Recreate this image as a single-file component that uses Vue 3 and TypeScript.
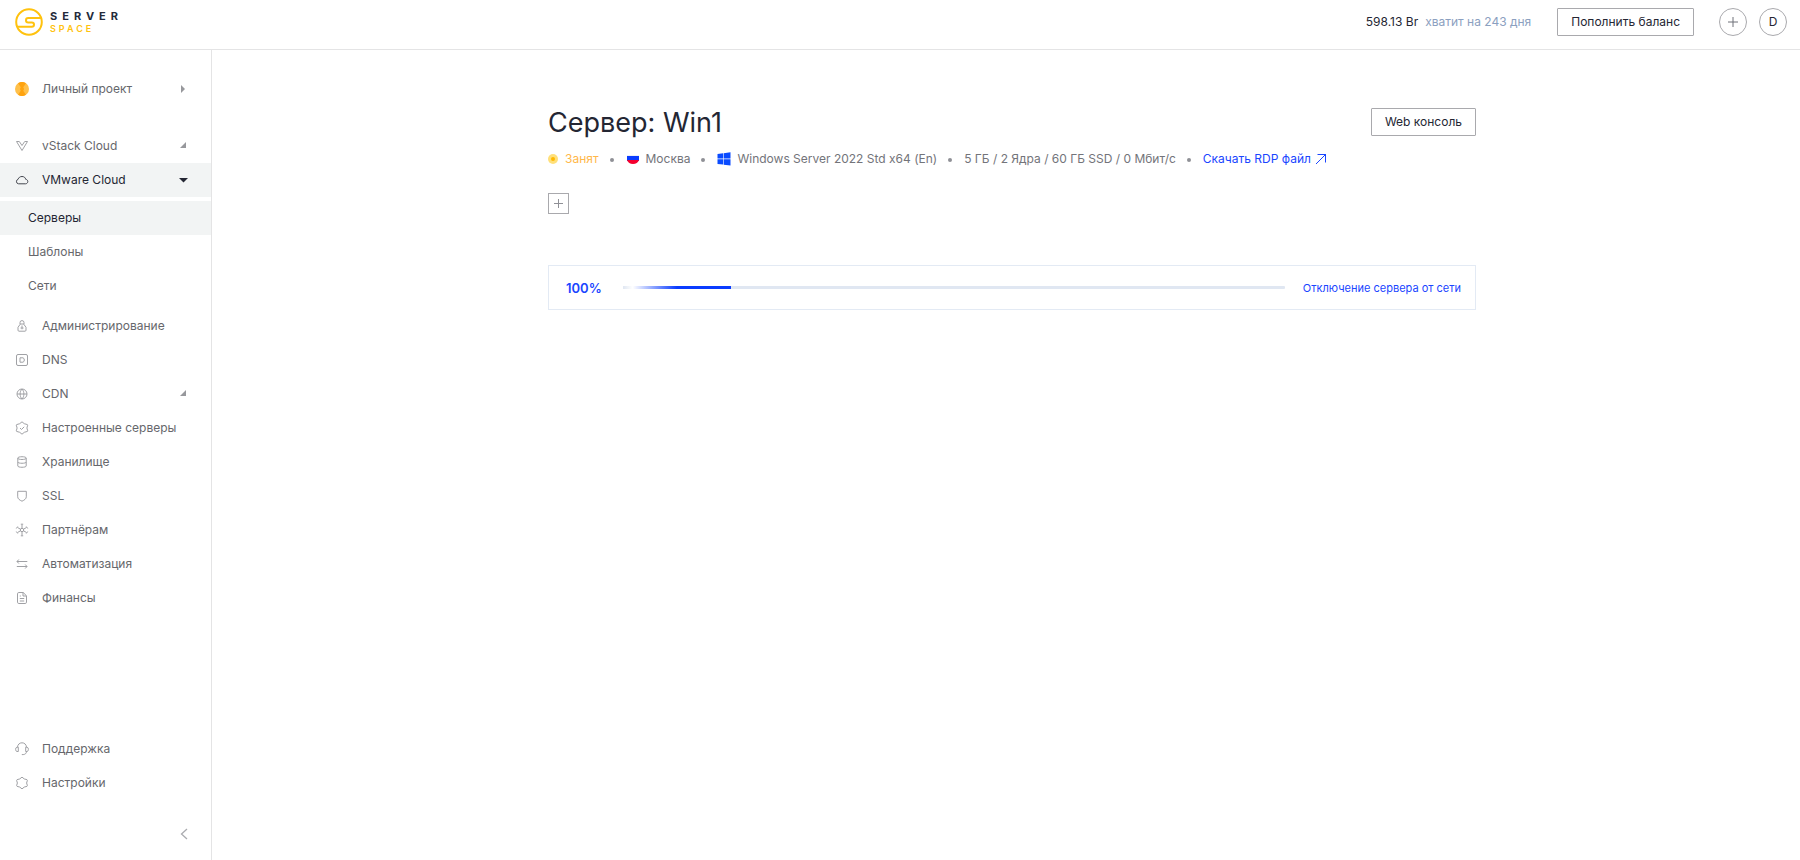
<script setup lang="ts">
interface MenuItem {
  label: string
  icon: string
  arrow?: 'closed' | 'open'
  active?: boolean
  children?: { label: string; active?: boolean }[]
}

// Outline icons on a 14 x 14 grid
const icons: Record<string, string> = {
  vstack: 'M1.500 2.500h2.800L7 6.500l2.700-4h2.800L7 11.500z',
  cloud: 'M3.600 10.800a2.300 2.300 0 0 1-.5-4.500C3.600 4.500 5.100 3.500 7 3.500s3.400 1 3.700 2.800c1.300.2 2.100 1.100 2.100 2.200 0 1.300-1 2.300-2.300 2.300z',
  admin: 'M5 5.500V3.600a2 2 0 0 1 4 0v1.900M5 5h4M5 5.500 3 8.300v2.900c0 .6.400 1 1 1h6c.6 0 1-.4 1-1V8.300L9 5.500M7 6.500v3.800M5.500 9h3',
  dns: 'M3 1.500h8A1.500 1.500 0 0 1 12.500 3v8a1.500 1.500 0 0 1-1.500 1.500H3A1.500 1.500 0 0 1 1.500 11V3A1.500 1.500 0 0 1 3 1.500zM5 4.800h3l1.200 1v2.400l-1.200 1H5z',
  cdn: 'M7 2a5 5 0 1 0 0 10A5 5 0 0 0 7 2zM2 7h10M7 2C4.500 4.500 4.500 9.500 7 12M7 2c2.500 2.500 2.500 7.500 0 10',
  ready: 'M7 .8 9.300 2.700 12.400 3.600 12.700 4.200 11.900 7l.8 2.800-.3.600-3.100.9L7 13.200l-2.300-1.900-3.100-.9-.3-.6L2.100 7l-.8-2.800.3-.6 3.100-.9zM5 7l1.500 1.500L9.200 5.800',
  storage: 'M2.800 3c0-1.700 8.400-1.700 8.400 0v8c0 1.700-8.400 1.700-8.400 0zM2.800 3.200c0 1.700 8.400 1.700 8.400 0M2.800 7c0 1.700 8.400 1.700 8.400 0',
  ssl: 'M2.700 2.300h8.600v5.500c0 2-1.900 3.300-4.300 4.400-2.400-1.100-4.300-2.400-4.300-4.400z',
  partner: 'M7 5.300a1.700 1.700 0 1 0 0 3.400 1.700 1.700 0 0 0 0-3.400zM7 5.300V1.500M7 8.700v3.800M5.500 6.200 2.500 4.500M8.500 6.200l3-1.700M5.500 7.800l-3 1.700M8.500 7.800l3 1.700M5.800 1.200h2.400M5.800 12.800h2.400M1.300 5.500l1.400-2M12.700 5.500l-1.400-2M1.300 8.500l1.400 2M12.700 8.500l-1.400 2',
  automation: 'M12.300 4.500H2M3.800 2.500 2 4.500l1.800 2M1.800 9.500H12M10.200 7.500l1.800 2-1.800 2',
  finance: 'M3.800 1.500h4.400l3.300 3.300v6.400c0 .8-.5 1.300-1.300 1.300H3.800c-.8 0-1.300-.5-1.300-1.300V2.800c0-.8.500-1.300 1.300-1.300zM8 1.500V5h3.500M4.800 7.500h4.400M4.800 10h4.400M4.800 5h1',
  support: 'M2.500 5.200C2.700 2.500 4.500.8 7 .8s4.300 1.700 4.500 4.400M3.300 5.200H1.900C.2 5.200.2 9.500 1.900 9.500h1.400zM10.700 5.200h1.400c1.700 0 1.700 4.300 0 4.300h-1.400zM11.500 9.500c0 2-1.500 3-3.300 3.100M6.800 12.600h1.400',
  settings: 'M7 1.100 9.200 2.900 12 3.700 12.400 4.400 11.600 7l.8 2.600-.4.700-2.800.8L7 12.900l-2.200-1.800-2.800-.8-.4-.7L2.400 7l-.8-2.600.4-.7 2.800-.8z',
}

const menu: MenuItem[] = [
  { label: 'vStack Cloud', icon: 'vstack', arrow: 'closed' },
  {
    label: 'VMware Cloud',
    icon: 'cloud',
    arrow: 'open',
    active: true,
    children: [{ label: 'Серверы', active: true }, { label: 'Шаблоны' }, { label: 'Сети' }],
  },
  { label: 'Администрирование', icon: 'admin' },
  { label: 'DNS', icon: 'dns' },
  { label: 'CDN', icon: 'cdn', arrow: 'closed' },
  { label: 'Настроенные серверы', icon: 'ready' },
  { label: 'Хранилище', icon: 'storage' },
  { label: 'SSL', icon: 'ssl' },
  { label: 'Партнёрам', icon: 'partner' },
  { label: 'Автоматизация', icon: 'automation' },
  { label: 'Финансы', icon: 'finance' },
]

const footerMenu: MenuItem[] = [
  { label: 'Поддержка', icon: 'support' },
  { label: 'Настройки', icon: 'settings' },
]
</script>

<template>
  <div class="app">
    <header class="header">
      <a href="#" class="logo" aria-label="Serverspace">
        <svg width="28" height="28" viewBox="0 0 28 28" fill="none" stroke="#ffc20e" stroke-width="2" aria-hidden="true">
          <circle cx="14" cy="14" r="12.800" />
          <path d="M26 10H13.200a2.200 2.200 0 0 0 0 4.400h3.600a2.200 2.200 0 0 1 0 4.400H2.500" />
        </svg>
        <span class="wordmark">
          <span class="word-top">SERVER</span>
          <span class="word-bottom">SPACE</span>
        </span>
      </a>
      <div class="account">
        <p class="balance"><span class="amount">598.13 Br</span><span class="days">хватит на 243 дня</span></p>
        <button type="button" class="btn topup">Пополнить баланс</button>
        <button type="button" class="round" aria-label="Создать">
          <svg width="12" height="12" viewBox="0 0 12 12" stroke="#6f7078" aria-hidden="true"><path d="M6 1v10M1 6h10" /></svg>
        </button>
        <button type="button" class="round user">D</button>
      </div>
    </header>

    <div class="body">
      <aside class="sidebar">
        <button type="button" class="item project">
          <svg class="avatar" width="14" height="14" viewBox="0 0 14 14" aria-hidden="true">
            <circle cx="7" cy="7" r="7" fill="#ffc04a" />
            <path d="M3 1.300a7 7 0 0 1 8 0L7 7zM3 12.700a7 7 0 0 0 8 0L7 7z" fill="#ffa30f" />
            <circle cx="7" cy="7" r="2" fill="#ffa30f" />
          </svg>
          <span>Личный проект</span>
          <svg class="arrow" width="10" height="10" viewBox="0 0 10 10" aria-hidden="true"><path d="M3 1l4 4-4 4z" /></svg>
        </button>

        <nav class="nav">
          <template v-for="entry in menu" :key="entry.label">
            <a href="#" class="item" :class="{ active: entry.active }">
              <svg class="icon" width="14" height="14" viewBox="0 0 14 14" aria-hidden="true"><path :d="icons[entry.icon]" /></svg>
              <span>{{ entry.label }}</span>
              <svg v-if="entry.arrow" class="arrow" width="10" height="10" viewBox="0 0 10 10" aria-hidden="true">
                <path :d="entry.arrow === 'open' ? 'M1 3h9L5.500 7.500z' : 'M8 1v6H2z'" />
              </svg>
            </a>
            <div v-if="entry.children" class="submenu">
              <a v-for="child in entry.children" :key="child.label" href="#" class="subitem" :class="{ active: child.active }">{{ child.label }}</a>
            </div>
          </template>
        </nav>

        <nav class="nav bottom">
          <a v-for="entry in footerMenu" :key="entry.label" href="#" class="item">
            <svg class="icon" width="14" height="14" viewBox="0 0 14 14" aria-hidden="true"><path :d="icons[entry.icon]" /></svg>
            <span>{{ entry.label }}</span>
          </a>
        </nav>
        <button type="button" class="collapse" aria-label="Свернуть меню">
          <svg width="8" height="12" viewBox="0 0 8 12" fill="none" stroke="#aaabaf" stroke-width="1.300" aria-hidden="true"><path d="M7 1 1.500 6 7 11" /></svg>
        </button>
      </aside>

      <main class="main">
        <div class="content">
          <div class="title-row">
            <h1>Сервер: Win1</h1>
            <button type="button" class="btn">Web консоль</button>
          </div>

          <ul class="meta">
            <li class="busy">
              <svg width="10" height="10" viewBox="0 0 10 10" aria-hidden="true">
                <circle cx="5" cy="5" r="5" fill="#ffe07a" /><circle cx="5" cy="5" r="2" fill="#ffb800" />
              </svg>
              Занят
            </li>
            <li>
              <svg width="14" height="14" viewBox="0 0 14 14" aria-hidden="true">
                <path d="M1 3h12v2H1z" fill="#edf0f6" /><path d="M1 4h12v5H1z" fill="#0a3cff" /><path d="M1 8h12c-1 2.500-3 4-6 4S2 10.500 1 8z" fill="#f5002e" />
              </svg>
              Москва
            </li>
            <li>
              <svg width="14" height="14" viewBox="0 0 14 14" fill="#0a4bff" aria-hidden="true">
                <path d="M.5 2l5.600-.7v5.300H.5zM6.700 1.200l6.800-.9v6.300H6.700zM.5 7.300h5.600v5.300L.5 12zM6.700 7.300h6.800v6.300l-6.800-.9z" />
              </svg>
              Windows Server 2022 Std x64 (En)
            </li>
            <li>5 ГБ / 2 Ядра / 60 ГБ SSD / 0 Мбит/с</li>
            <li>
              <a href="#" class="rdp">
                Скачать RDP файл
                <svg width="12" height="12" viewBox="0 0 12 12" fill="none" stroke="#1a46ff" aria-hidden="true"><path d="M1 11 11 1M2.500 1.500h8v8" /></svg>
              </a>
            </li>
          </ul>

          <button type="button" class="add-tag" aria-label="Добавить тег">
            <svg width="9" height="9" viewBox="0 0 9 9" stroke="#8f9096" aria-hidden="true"><path d="M4.500 0v9M0 4.500h9" /></svg>
          </button>

          <section class="task">
            <span class="percent">100%</span>
            <div class="track"><div class="runner"></div></div>
            <span class="task-name">Отключение сервера от сети</span>
          </section>
        </div>
      </main>
    </div>
  </div>
</template>

<style>
body {
  background: #fff;
}
</style>

<style scoped>
.app {
  display: flex;
  flex-direction: column;
  min-height: 100vh;
  font: 12px/16px Inter, 'Liberation Sans', sans-serif;
  color: #242633;
}
.app *,
.app {
  box-sizing: border-box;
}
button {
  font: inherit;
  color: inherit;
  background: none;
  border: 0;
  padding: 0;
  cursor: pointer;
}
a {
  color: inherit;
  text-decoration: none;
}
svg {
  flex: none;
  display: block;
}
.header {
  display: flex;
  justify-content: space-between;
  height: 50px;
  padding: 8px 13px 0 15px;
  border-bottom: 1px solid #e4e4e5;
}
.logo {
  display: flex;
  gap: 7px;
  height: 28px;
}
.wordmark {
  display: flex;
  flex-direction: column;
  padding-top: 2px;
}
.word-top {
  font-size: 11px;
  line-height: 13px;
  font-weight: 700;
  letter-spacing: 5px;
  color: #242a3a;
}
.word-bottom {
  font-size: 9px;
  line-height: 12px;
  font-weight: 600;
  letter-spacing: 3px;
  color: #ffc20e;
}
.account {
  display: flex;
  height: 28px;
  align-items: center;
}
.balance {
  display: flex;
  gap: 7px;
  margin: 0 26px 0 0;
}
.days {
  color: #8ba0c0;
}
.btn {
  height: 28px;
  padding: 0 13px;
  border: 1px solid #a9a9ad;
  border-radius: 1px;
  flex: none;
}
.topup {
  margin-right: 25px;
}
.round {
  display: grid;
  place-items: center;
  width: 28px;
  height: 28px;
  border: 1px solid #a9a9ad;
  border-radius: 50%;
}
.user {
  margin-left: 12px;
}
.body {
  display: flex;
  flex: 1;
}
.sidebar {
  display: flex;
  flex-direction: column;
  width: 212px;
  flex: none;
  padding: 22px 0 15px;
  border-right: 1px solid #e4e4e5;
  color: #66676c;
}
.item {
  display: flex;
  align-items: center;
  gap: 13px;
  width: 100%;
  height: 34px;
  padding: 0 23px 0 15px;
  text-align: left;
}
.project {
  margin-bottom: 23px;
}
.icon {
  fill: none;
  stroke: #a0a1a5;
}
.arrow {
  margin-left: auto;
  fill: #97989c;
}
.active {
  color: #242633;
  background: #f2f4f4;
}
.active .icon {
  stroke: #44464f;
}
.active .arrow {
  fill: #242633;
}
.submenu {
  padding: 4px 0 6px;
}
.subitem {
  display: flex;
  align-items: center;
  height: 34px;
  padding-left: 28px;
}
.bottom {
  margin-top: auto;
}
.collapse {
  align-self: flex-end;
  margin: 23px 18px 0 0;
  padding: 5px;
}
.main {
  flex: 1;
  min-width: 0;
  padding: 58px 12px 40px 24px;
}
.content {
  max-width: 928px;
  margin: 0 auto;
}
.title-row {
  display: flex;
  justify-content: space-between;
  align-items: flex-start;
}
h1 {
  margin: 0;
  font-size: 27px;
  line-height: 30px;
  font-weight: 400;
}
.meta {
  display: flex;
  flex-wrap: wrap;
  margin: 13px 0 0;
  padding: 0;
  list-style: none;
  color: #73747a;
}
.meta li {
  display: flex;
  align-items: center;
  gap: 6px;
}
.meta li + li::before {
  content: '';
  width: 4px;
  height: 4px;
  margin: 2px 6px 0 11px;
  border-radius: 50%;
  background: #8f9096;
}
.meta .busy {
  gap: 7px;
  color: #ffb84a;
}
.rdp {
  display: flex;
  align-items: center;
  gap: 4px;
  color: #1a46ff;
}
.add-tag {
  display: grid;
  place-items: center;
  width: 21px;
  height: 21px;
  margin-top: 26px;
  border: 1px solid #a9a9ad;
}
.task {
  display: flex;
  align-items: center;
  height: 45px;
  margin-top: 51px;
  padding: 0 14px 0 17px;
  border: 1px solid #e3eaf4;
  color: #1a46ff;
}
.percent {
  font-size: 13px;
  font-weight: 600;
}
.track {
  flex: 1;
  height: 3px;
  margin: 0 18px 0 21px;
  background: #e0e7f2;
  border-radius: 1px;
}
.runner {
  width: 108px;
  height: 3px;
  background: linear-gradient(90deg, #e0e7f2, #fff 9%, #0a3cff 50%);
}
.task-name {
  font-size: 11px;
}
</style>
